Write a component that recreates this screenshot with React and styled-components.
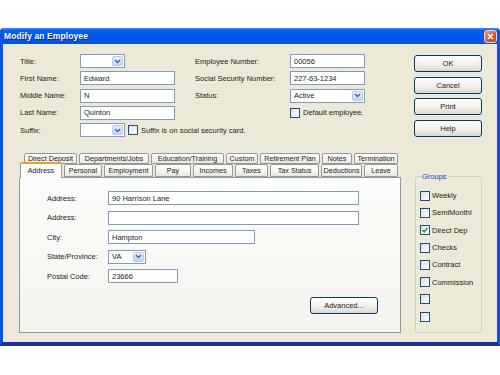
import React from 'react'
import styled, { createGlobalStyle } from 'styled-components'

const GlobalStyle = createGlobalStyle`
  body {
    margin: 0;
    background: #ffffff;
    font-family: "Liberation Sans", Arial, sans-serif;
  }
`

const Page = styled.div`
  padding-top: 28px;
  width: 500px;
  height: 375px;
  box-sizing: border-box;
`

const Window = styled.div`
  width: 500px;
  border-left: 3px solid #0a53e4;
  border-right: 3px solid #0a53e4;
  border-bottom: 4px solid #1a2fa8;
  box-sizing: border-box;
  border-radius: 4px 4px 0 0;
  overflow: hidden;
`

const TitleBar = styled.div`
  height: 16px;
  margin: 0 -3px;
  padding: 0 3px 0 4px;
  display: flex;
  align-items: center;
  justify-content: space-between;
  background: linear-gradient(#3a8cfb 0%, #0a62f0 15%, #0058e8 45%, #0456e6 75%, #0a4fd8 100%);
  color: #ffffff;
  font-weight: bold;
  font-size: 8.5px;
  letter-spacing: 0.1px;
  text-shadow: 1px 1px 0 #0a2a8a;
`

const CloseBtn = styled.span`
  width: 11px;
  height: 11px;
  border: 1px solid #f4d6c8;
  border-radius: 3px;
  background: linear-gradient(135deg, #f09a75, #d4552a 60%, #c04018);
  display: flex;
  align-items: center;
  justify-content: center;
`

const Body = styled.div`
  background: #ece9d8;
  height: 298px;
  box-sizing: border-box;
  padding: 10px 15px 9px 16px;
  display: flex;
  gap: 13px;
  font-size: 7.5px;
  color: #1c1c1c;
`

const LeftCol = styled.div`
  width: 382px;
  display: flex;
  flex-direction: column;
`

const RightCol = styled.div`
  width: 68px;
  display: flex;
  flex-direction: column;
`

const TopForm = styled.div`
  display: grid;
  grid-template-columns: 60px 115px 95px 75px;
  grid-auto-rows: 14px;
  row-gap: 3.25px;
  padding-left: 1px;
`

const Label = styled.div`
  display: flex;
  align-items: center;
  white-space: nowrap;
`

const Cell = styled.div`
  display: flex;
  align-items: center;
  gap: 3px;
  white-space: nowrap;
  grid-column: ${p => p.$span || 'auto'};
`

const TextBox = styled.div`
  width: ${p => p.$w}px;
  height: 14px;
  box-sizing: border-box;
  border: 1px solid #7f9db9;
  background: #ffffff;
  padding-left: 3px;
  display: flex;
  align-items: center;
  white-space: nowrap;
`

const SelectBox = styled(TextBox)`
  justify-content: space-between;
  padding-right: 1px;
`

const DropBtn = styled.span`
  width: 11px;
  height: 10px;
  border-radius: 2px;
  background: linear-gradient(#e4ecfd, #c3d3fd);
  border: 1px solid #b7c8f6;
  box-sizing: border-box;
  display: flex;
  align-items: center;
  justify-content: center;
`

const Check = styled.span`
  width: 10px;
  height: 10px;
  flex: none;
  box-sizing: border-box;
  border: 1px solid #1c5180;
  background: linear-gradient(135deg, #dcdcd7, #ffffff);
  display: flex;
  align-items: center;
  justify-content: center;
`

const Button = styled.div`
  height: 17px;
  box-sizing: border-box;
  border: 1px solid #003c74;
  border-radius: 3px;
  background: linear-gradient(#ffffff, #f0efe9 60%, #dcd8cc);
  display: flex;
  align-items: center;
  justify-content: center;
  width: ${p => (p.$w ? `${p.$w}px` : 'auto')};
`

const Buttons = styled.div`
  display: flex;
  flex-direction: column;
  gap: 4.5px;
  margin-top: 1px;
`

const Tabs = styled.div`
  margin-top: 16px;
  display: flex;
  flex-direction: column;
`

const TabRow = styled.div`
  display: flex;
  gap: 2px;
  align-items: flex-end;
  height: ${p => p.$h}px;
  padding-left: ${p => p.$pad}px;
  position: relative;
  z-index: ${p => p.$z};
`

const Tab = styled.div`
  width: ${p => p.$w}px;
  height: ${p => (p.$active ? 16 : p.$h)}px;
  margin-bottom: ${p => (p.$active ? -1 : 0)}px;
  box-sizing: border-box;
  border: 1px solid #919b9c;
  border-bottom: ${p => (p.$active ? 'none' : '1px solid #919b9c')};
  border-top: ${p => (p.$active ? '2px solid #f0a030' : '1px solid #919b9c')};
  border-radius: 2px 2px 0 0;
  background: ${p => (p.$active ? '#fcfcfa' : 'linear-gradient(#ffffff, #f2f1ea 70%, #e6e4dc)')};
  display: flex;
  align-items: center;
  justify-content: center;
  white-space: nowrap;
  font-size: 7.2px;
  padding-bottom: ${p => (p.$active ? 2 : 0)}px;
`

const Panel = styled.div`
  height: 156px;
  box-sizing: border-box;
  border: 1px solid #919b9c;
  background: linear-gradient(#fcfcfa, #f4f3ee);
  padding: 13px 22px 0 27px;
  display: flex;
  flex-direction: column;
`

const AddrForm = styled.div`
  display: grid;
  grid-template-columns: 61px 1fr;
  grid-auto-rows: 14px;
  row-gap: 5.5px;
`

const PanelFooter = styled.div`
  display: flex;
  justify-content: flex-end;
  margin-top: 14px;
`

const GroupBox = styled.fieldset`
  margin: auto 0 0 1px;
  padding: 6px 0 0 4px;
  height: 161px;
  box-sizing: border-box;
  border: 1px solid #d0d0bf;
  border-radius: 3px;
  min-width: 0;
`

const Legend = styled.legend`
  color: #0046d5;
  padding: 0 1px;
  margin-left: 1px;
  font-size: 7.5px;
`

const GroupRow = styled.div`
  height: 17.3px;
  display: flex;
  align-items: center;
  gap: 2px;
  white-space: nowrap;
  overflow: hidden;
`

const Chevron = () => (
  <svg width="7" height="5" viewBox="0 0 7 5">
    <path d="M1 1 L3.5 3.5 L6 1" fill="none" stroke="#4d6185" strokeWidth="1.4" />
  </svg>
)

const Tick = () => (
  <svg width="8" height="8" viewBox="0 0 8 8">
    <path d="M1.5 4 L3.2 5.8 L6.5 2" fill="none" stroke="#21a121" strokeWidth="1.5" />
  </svg>
)

const Select = ({ w, value }) => (
  <SelectBox $w={w}>
    <span>{value}</span>
    <DropBtn><Chevron /></DropBtn>
  </SelectBox>
)

const CheckField = ({ checked, children }) => (
  <>
    <Check>{checked && <Tick />}</Check>
    {children && <span>{children}</span>}
  </>
)

const backTabs = [
  ['Direct Deposit', 53], ['Departments/Jobs', 70], ['Education/Training', 73],
  ['Custom', 32], ['Retirement Plan', 60], ['Notes', 30], ['Termination', 44],
]

const frontTabs = [
  ['Address', 42], ['Personal', 38], ['Employment', 49], ['Pay', 36], ['Incomes', 40],
  ['Taxes', 33], ['Tax Status', 49], ['Deductions', 41], ['Leave', 34],
]

const groups = [
  ['Weekly', false], ['SemiMonthl', false], ['Direct Dep', true], ['Checks', false],
  ['Contract', false], ['Commission', false], ['', false], ['', false],
]

export default function App() {
  return (
    <Page>
      <GlobalStyle />
      <Window>
        <TitleBar>
          <span>Modify an Employee</span>
          <CloseBtn>
            <svg width="7" height="7" viewBox="0 0 7 7">
              <path d="M1 1 L6 6 M6 1 L1 6" stroke="#ffffff" strokeWidth="1.5" />
            </svg>
          </CloseBtn>
        </TitleBar>
        <Body>
          <LeftCol>
            <TopForm>
              <Label>Title:</Label>
              <Cell><Select w={45} value="" /></Cell>
              <Label>Employee Number:</Label>
              <Cell><TextBox $w={75}>00056</TextBox></Cell>

              <Label>First Name:</Label>
              <Cell><TextBox $w={95}>Edward</TextBox></Cell>
              <Label>Social Security Number:</Label>
              <Cell><TextBox $w={75}>227-63-1234</TextBox></Cell>

              <Label>Middle Name:</Label>
              <Cell><TextBox $w={95}>N</TextBox></Cell>
              <Label>Status:</Label>
              <Cell><Select w={75} value="Active" /></Cell>

              <Label>Last Name:</Label>
              <Cell><TextBox $w={95}>Quinton</TextBox></Cell>
              <Label />
              <Cell><CheckField>Default employee.</CheckField></Cell>

              <Label>Suffix:</Label>
              <Cell $span="2 / -1">
                <Select w={45} value="" />
                <CheckField>Suffix is on social security card.</CheckField>
              </Cell>
            </TopForm>

            <Tabs>
              <TabRow $h={11} $pad={5} $z={0}>
                {backTabs.map(([name, w]) => (
                  <Tab key={name} $w={w} $h={11}>{name}</Tab>
                ))}
              </TabRow>
              <TabRow $h={13} $pad={1} $z={1}>
                {frontTabs.map(([name, w], i) => (
                  <Tab key={name} $w={w} $h={13} $active={i === 0}>{name}</Tab>
                ))}
              </TabRow>
              <Panel>
                <AddrForm>
                  <Label>Address:</Label>
                  <Cell><TextBox $w={251}>90 Harrison Lane</TextBox></Cell>
                  <Label>Address:</Label>
                  <Cell><TextBox $w={251} /></Cell>
                  <Label>City:</Label>
                  <Cell><TextBox $w={147}>Hampton</TextBox></Cell>
                  <Label>State/Province:</Label>
                  <Cell><Select w={38} value="VA" /></Cell>
                  <Label>Postal Code:</Label>
                  <Cell><TextBox $w={70}>23666</TextBox></Cell>
                </AddrForm>
                <PanelFooter>
                  <Button $w={68}>Advanced...</Button>
                </PanelFooter>
              </Panel>
            </Tabs>
          </LeftCol>

          <RightCol>
            <Buttons>
              <Button>OK</Button>
              <Button>Cancel</Button>
              <Button>Print</Button>
              <Button>Help</Button>
            </Buttons>
            <GroupBox>
              <Legend>Groups</Legend>
              {groups.map(([name, on], i) => (
                <GroupRow key={i}>
                  <CheckField checked={on}>{name}</CheckField>
                </GroupRow>
              ))}
            </GroupBox>
          </RightCol>
        </Body>
      </Window>
    </Page>
  )
}
